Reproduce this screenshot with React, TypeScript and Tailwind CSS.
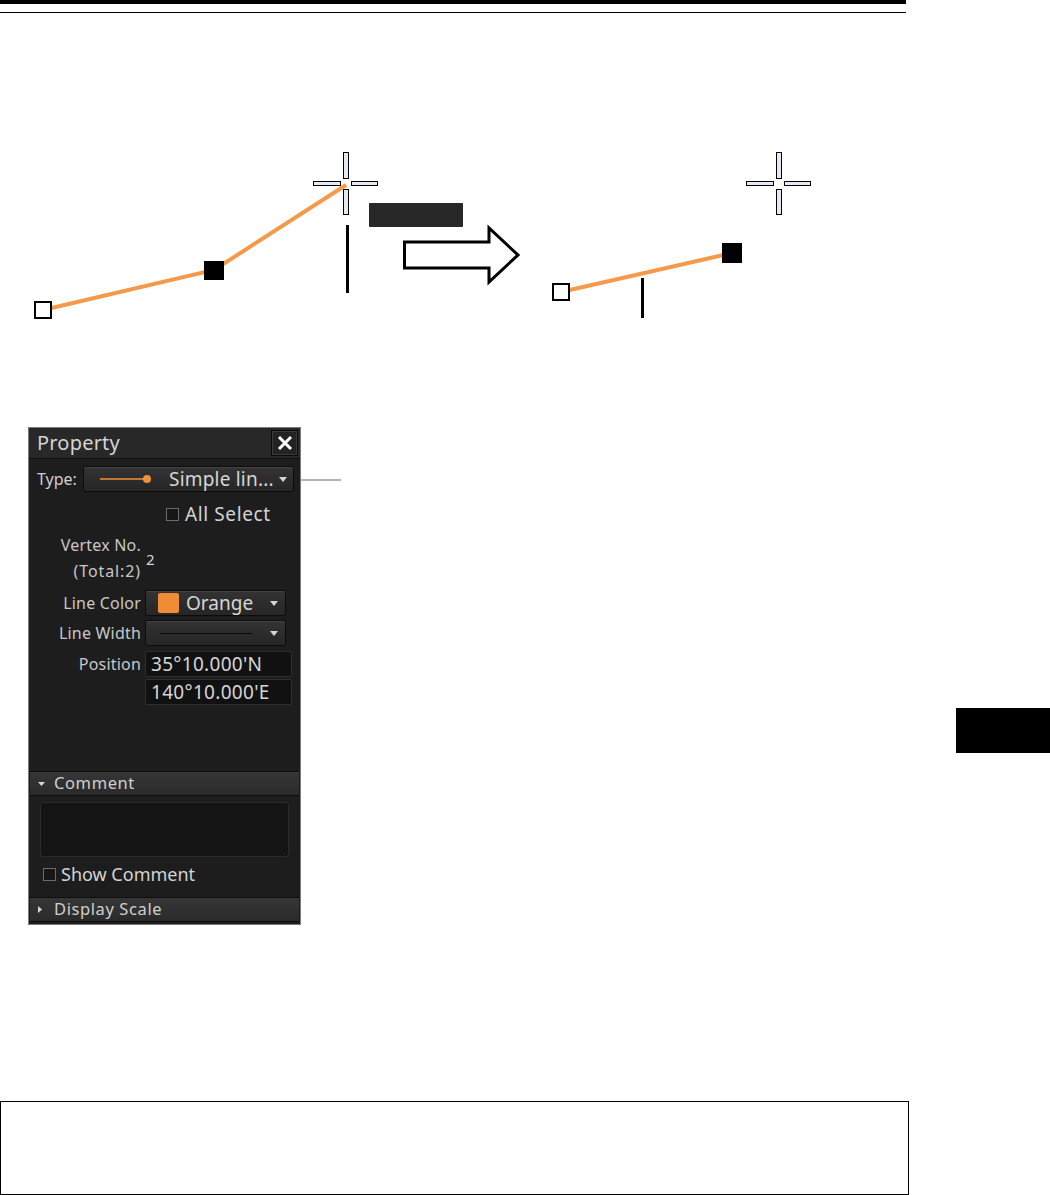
const font = { fontFamily: '"Noto Sans", "Open Sans", sans-serif' };

const Crosshair = ({ cx, cy }: { cx: number; cy: number }) => (
  <g fill="#e4eaf4" stroke="#000" strokeWidth={1}>
    <rect x={cx - 2.5} y={cy - 31.5} width={5} height={26} />
    <rect x={cx - 2.5} y={cy + 5.5} width={5} height={25} />
    <rect x={cx - 32.5} y={cy - 2.5} width={27} height={4} />
    <rect x={cx + 5.5} y={cy - 2.5} width={26} height={4} />
  </g>
);

const Diagram = () => (
  <svg width={1050} height={190} viewBox="0 140 1050 190" className="block">
    {/* before */}
    <polyline points="43,310 214,270 346,185" fill="none" stroke="#f59a4b" strokeWidth={4} />
    <rect x={35} y={302} width={16} height={16} fill="#fff" stroke="#000" strokeWidth={2} />
    <rect x={204} y={261} width={20} height={19} fill="#000" />
    <Crosshair cx={346} cy={184} />
    <rect x={346} y={225} width={3} height={68} fill="#000" />
    <rect x={369} y={203} width={94} height={24} rx={1} fill="#282828" />
    <polygon
      points="404.5,242 489,242 489,228 518,255 489,282 489,268 404.5,268"
      fill="#fff"
      stroke="#000"
      strokeWidth={3}
    />
    {/* after */}
    <polyline points="561,292 732,253" fill="none" stroke="#f59a4b" strokeWidth={4} />
    <rect x={553} y={284} width={16} height={16} fill="#fff" stroke="#000" strokeWidth={2} />
    <rect x={722} y={243} width={20} height={20} fill="#000" />
    <Crosshair cx={779} cy={184} />
    <rect x={641} y={278} width={3} height={40} fill="#000" />
  </svg>
);

const Arrow = () => (
  <svg width={8} height={5} viewBox="0 0 8 5">
    <path d="M0 0H8L4 5Z" fill="#d6d6d6" />
  </svg>
);

const Check = () => (
  <span className="block h-[13px] w-[13px] shrink-0 border border-[#6b6b6b] bg-[#161616]" />
);

const dropBox =
  "flex h-[26px] items-center rounded-[2px] border border-[#0c0c0c] bg-gradient-to-b from-[#333333] to-[#262626] shadow-[inset_0_1px_0_#444]";

const inputBox =
  "flex h-[26px] w-[147px] items-center rounded-[2px] border border-[#2e2e2e] bg-[#111111] pl-[5px] text-[19px] tracking-[0.3px] text-[#d6d6d6]";

const label = "w-[112px] text-right text-[16px] tracking-[0.2px] text-[#c8c8c8]";

const Section = ({ label, open }: { label: string; open: boolean }) => (
  <div className="mx-[1px] flex h-[25px] items-center border-y border-[#0e0e0e] bg-gradient-to-b from-[#363636] to-[#2a2a2a] pl-[8px] text-[16.5px] tracking-[0.6px] text-[#cfcfcf]">
    <span className="flex w-[16px] items-center">
      {open ? (
        <svg width={7} height={4} viewBox="0 0 7 4">
          <path d="M0 0H7L3.5 4Z" fill="#d6d6d6" />
        </svg>
      ) : (
        <svg width={4} height={7} viewBox="0 0 4 7">
          <path d="M0 0V7L4 3.5Z" fill="#d6d6d6" />
        </svg>
      )}
    </span>
    {label}
  </div>
);

const PropertyPanel = () => (
  <div className="ml-[28px] flex w-[273px] flex-col border border-[#7c7c7c] bg-[#1d1d1d] pb-[2px]" style={font}>
    <div className="flex h-[31px] items-center justify-between border-b border-[#0f0f0f] bg-[#282828] pl-[8px] pr-[2px]">
      <span className="text-[20px] leading-none tracking-[0.2px] text-[#d4d4d4]">Property</span>
      <div className="flex h-[26px] w-[27px] items-center justify-center border border-[#0a0a0a] bg-[#232323] shadow-[inset_0_0_0_1px_#3a3a3a]">
        <svg width={16} height={16} viewBox="0 0 16 16">
          <path d="M2 2L14 14M14 2L2 14" stroke="#fff" strokeWidth={3} />
        </svg>
      </div>
    </div>

    <div className="mt-[7px] flex items-center pl-[8px]">
      <span className="w-[46px] text-[16px] text-[#cfcfcf]">Type:</span>
      <div className={`${dropBox} w-[211px]`}>
        <svg width={60} height={10} viewBox="0 0 60 10" className="ml-[16px]">
          <line x1={0} y1={5} x2={44} y2={5} stroke="#f0903c" strokeWidth={1.5} />
          <circle cx={47} cy={5} r={4} fill="#f0903c" />
        </svg>
        <span className="ml-[9px] text-[19px] tracking-[0.2px] text-[#d6d6d6]">Simple lin...</span>
        <span className="ml-auto mr-[6px]">
          <Arrow />
        </span>
      </div>
    </div>

    <div className="mt-[11px] flex h-[22px] items-center gap-[6px] pl-[137px] text-[19px] tracking-[0.6px] text-[#d4d4d4]">
      <Check />
      <span>All Select</span>
    </div>

    <div className="mt-[7px] flex items-center">
      <div className={`${label} leading-[26px]`}>
        <div>Vertex No.</div>
        <div className="tracking-[0.9px]">(Total:2)</div>
      </div>
      <span className="ml-[5px] mt-[3px] text-[15px] text-[#d6d6d6]">2</span>
    </div>

    <div className="mt-[6px] flex items-center gap-[4px]">
      <span className={label}>Line Color</span>
      <div className={`${dropBox} w-[141px]`}>
        <span className="ml-[12px] h-[20px] w-[21px] rounded-[2px] bg-[#f08c35]" />
        <span className="ml-[7px] text-[19px] text-[#d6d6d6]">Orange</span>
        <span className="ml-auto mr-[7px]">
          <Arrow />
        </span>
      </div>
    </div>

    <div className="mt-[4px] flex items-center gap-[4px]">
      <span className={label}>Line Width</span>
      <div className={`${dropBox} w-[141px]`}>
        <span className="ml-[14px] h-px w-[92px] bg-[#0a0a0a]" />
        <span className="ml-auto mr-[7px]">
          <Arrow />
        </span>
      </div>
    </div>

    <div className="mt-[5px] flex items-center gap-[4px]">
      <span className={label}>Position</span>
      <div className={inputBox}>35°10.000'N</div>
    </div>
    <div className="mt-[2px] flex items-center gap-[4px]">
      <span className="w-[112px]" />
      <div className={inputBox}>140°10.000'E</div>
    </div>

    <div className="mt-[66px]">
      <Section label="Comment" open />
    </div>
    <div className="mx-[11px] mt-[6px] h-[55px] rounded-[3px] border border-[#2b2b2b] bg-[#141414]" />
    <div className="mt-[6px] flex h-[22px] items-center gap-[5px] pl-[14px] text-[18px] text-[#d4d4d4]">
      <Check />
      <span>Show Comment</span>
    </div>
    <div className="mt-[12px]">
      <Section label="Display Scale" open={false} />
    </div>
  </div>
);

export default function App() {
  return (
    <div className="relative h-[1195px] w-[1050px] overflow-hidden bg-white">
      <div className="h-[4px] w-[906px] bg-black" />
      <div className="mt-[8px] h-px w-[906px] bg-black" />

      <div className="mt-[127px]">
        <Diagram />
      </div>

      <div className="mt-[97px] flex items-start">
        <PropertyPanel />
        <div className="mt-[52px] h-[2px] w-[40px] bg-[#b4b4b4]" />
        <div className="ml-auto mt-[281px] h-[45px] w-[94px] bg-black" />
      </div>

      <div className="mt-[176px] h-[94px] w-[909px] border border-black" />
    </div>
  );
}
